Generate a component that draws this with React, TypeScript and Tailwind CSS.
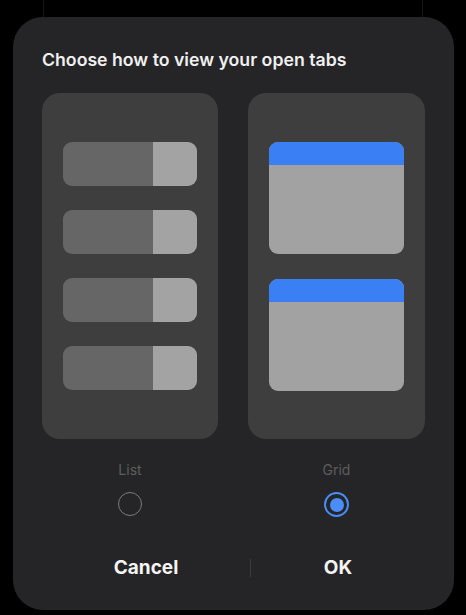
import React from "react";

const font = { fontFamily: "Inter, 'Noto Sans', sans-serif" };

function ListRow() {
  return (
    <div className="flex h-[44px] w-[134px] overflow-hidden rounded-[9px]">
      <div className="w-[90px] bg-[#666666]" />
      <div className="flex-1 bg-[#a3a3a3]" />
    </div>
  );
}

function GridThumb() {
  return (
    <div className="flex h-[112px] w-[135px] flex-col overflow-hidden rounded-[9px] bg-[#a2a2a2]">
      <div className="h-[23px] bg-[#3a80f4]" />
    </div>
  );
}

export default function App() {
  return (
    <div className="h-[615px] w-[466px] overflow-hidden bg-black" style={font}>
      <div className="h-[17px]">
        <div className="ml-[43px] h-full w-[380px] border-x border-[#141414]" />
      </div>
      <div className="ml-[13px] flex h-[593px] w-[441px] flex-col rounded-[30px] bg-[#252527] px-[29px] pt-[31px]">
        <h1 className="text-[17.7px] font-semibold leading-[24px] text-[#f0f0f0]">
          Choose how to view your open tabs
        </h1>
        <div className="mt-[21px] flex gap-[30px]">
          <div className="flex flex-col items-center">
            <div className="flex h-[346px] w-[176px] flex-col items-center justify-center gap-[24px] rounded-[18px] bg-[#3e3e3e]">
              <ListRow />
              <ListRow />
              <ListRow />
              <ListRow />
            </div>
            <div className="mt-[21px] text-[14px] leading-[20px] text-[#5e5e5e]">List</div>
            <div className="mt-[12px] h-[24px] w-[24px] rounded-full border-[1.5px] border-[#7c7c7c]" />
          </div>
          <div className="flex flex-col items-center">
            <div className="flex h-[346px] w-[177px] flex-col items-center justify-center gap-[25px] rounded-[18px] bg-[#3e3e3e]">
              <GridThumb />
              <GridThumb />
            </div>
            <div className="mt-[21px] text-[14px] leading-[20px] text-[#5e5e5e]">Grid</div>
            <div className="mt-[12px] flex h-[25px] w-[25px] items-center justify-center rounded-full border-2 border-[#4a8cf5]">
              <div className="h-[14px] w-[14px] rounded-full bg-[#4a8df8]" />
            </div>
          </div>
        </div>
        <div className="mt-[37px] flex items-center">
          <div className="w-[208px] text-center text-[19px] font-bold leading-[28px] text-[#f5f5f5]">Cancel</div>
          <div className="h-[18px] w-px bg-[#3a3a3a]" />
          <div className="w-[174px] text-center text-[19px] font-bold leading-[28px] text-[#f5f5f5]">OK</div>
        </div>
      </div>
    </div>
  );
}
